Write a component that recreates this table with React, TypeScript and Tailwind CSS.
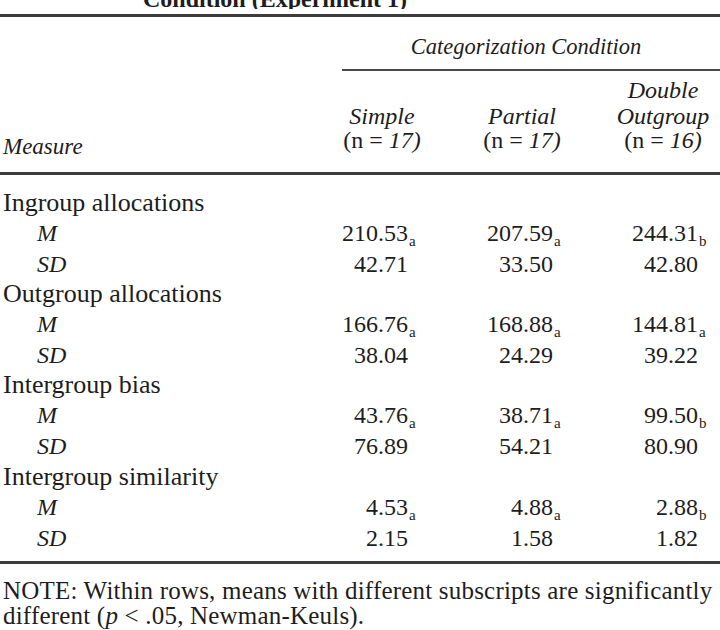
import React from "react";

type Section = {
  label: string;
  m: [string, string][];
  sd: string[];
};

const sections: Section[] = [
  {
    label: "Ingroup allocations",
    m: [["210.53", "a"], ["207.59", "a"], ["244.31", "b"]],
    sd: ["42.71", "33.50", "42.80"],
  },
  {
    label: "Outgroup allocations",
    m: [["166.76", "a"], ["168.88", "a"], ["144.81", "a"]],
    sd: ["38.04", "24.29", "39.22"],
  },
  {
    label: "Intergroup bias",
    m: [["43.76", "a"], ["38.71", "a"], ["99.50", "b"]],
    sd: ["76.89", "54.21", "80.90"],
  },
  {
    label: "Intergroup similarity",
    m: [["4.53", "a"], ["4.88", "a"], ["2.88", "b"]],
    sd: ["2.15", "1.58", "1.82"],
  },
];

// column boxes: simple / partial / double outgroup
const colClass = ["w-[80px]", "ml-[55px] w-[90px]", "ml-[47px] w-[98px]"];

const NumCell: React.FC<{ value: string; sub?: string; idx: number }> = ({ value, sub, idx }) => (
  <div className={`${colClass[idx]} text-right text-[24px]`}>
    <span>{value}</span>
    <span className="inline-block w-[14px] pl-[1px] text-left text-[15px] leading-none align-[-5px]">
      {sub ?? ""}
    </span>
  </div>
);

const App: React.FC = () => {
  return (
    <div className="w-[720px] h-[630px] overflow-hidden bg-white text-[#1d1d1d] font-['Liberation_Serif',serif]">
      {/* cut-off table caption */}
      <div className="h-[9px] overflow-hidden pl-[143px]">
        <div className="-mt-[13px] text-[24px] leading-[24px] font-bold whitespace-nowrap">
          Condition (Experiment 1)
        </div>
      </div>
      <div className="mt-[5px] h-[3px] bg-[#3c3c3c]"></div>

      {/* header */}
      <div className="flex items-end">
        <div className="w-[342px] pl-[3px] italic text-[23px] leading-[26px]">Measure</div>
        <div className="flex-1">
          <div className="mt-[16px] pr-[10px] text-center italic text-[22.5px] leading-[28px]">
            Categorization Condition
          </div>
          <div className="mt-[8px] h-[2px] bg-[#4a4a4a]"></div>
          <div className="mt-[5px] flex items-end pb-[7px] italic text-[24px]">
            <div className={`${colClass[0]} text-center`}>
              <div className="leading-[22px]">Simple</div>
              <div className="leading-[26px]">
                <span className="not-italic">(n = </span>17)
              </div>
            </div>
            <div className={`${colClass[1]} text-center`}>
              <div className="leading-[22px]">Partial</div>
              <div className="leading-[26px]">
                <span className="not-italic">(n = </span>17)
              </div>
            </div>
            <div className={`${colClass[2]} text-center`}>
              <div className="leading-[29px]">Double</div>
              <div className="leading-[22px]">Outgroup</div>
              <div className="leading-[26px]">
                <span className="not-italic">(n = </span>16)
              </div>
            </div>
          </div>
        </div>
      </div>
      <div className="mt-[12px] h-[3px] bg-[#3c3c3c]"></div>

      {/* body */}
      <div className="mt-[13px]">
        {sections.map((s) => (
          <div key={s.label}>
            <div className="pl-[3px] text-[26px] leading-[30.1px]">{s.label}</div>
            <div className="flex items-baseline leading-[30.1px]">
              <div className="w-[342px] pl-[37px] italic text-[24px]">M</div>
              {s.m.map(([v, sub], i) => (
                <NumCell key={i} value={v} sub={sub} idx={i} />
              ))}
            </div>
            <div className="flex items-baseline leading-[30.1px]">
              <div className="w-[342px] pl-[37px] italic text-[24px]">SD</div>
              {s.sd.map((v, i) => (
                <NumCell key={i} value={v} idx={i} />
              ))}
            </div>
          </div>
        ))}
      </div>
      <div className="mt-[8px] h-[3px] bg-[#3c3c3c]"></div>

      {/* note */}
      <div className="mt-[14px] pl-[3px] text-[25px] leading-[25.5px] tracking-[0.2px] whitespace-nowrap">
        <div>NOTE: Within rows, means with different subscripts are significantly</div>
        <div>
          different (<span className="italic">p</span> &lt; .05, Newman-Keuls).
        </div>
      </div>
    </div>
  );
};

export default App;
